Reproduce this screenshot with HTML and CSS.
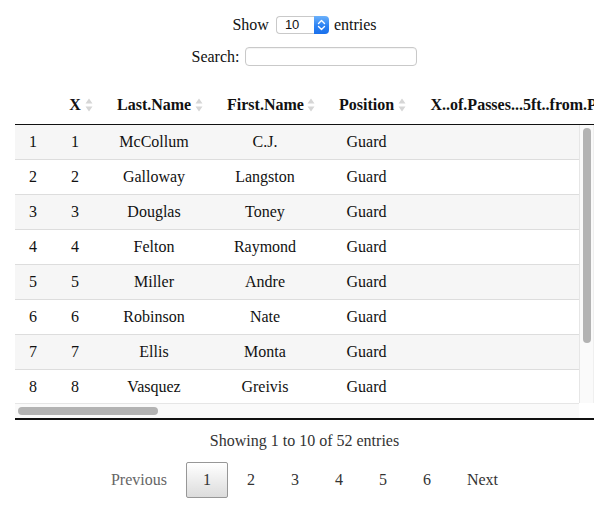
FILE: index.html
```html
<!DOCTYPE html>
<html lang="en">
<head>
<meta charset="utf-8">
<title>DataTable</title>
<link rel="stylesheet" href="styles.css">
</head>
<body>
<div class="dt-wrapper">
  <div class="dt-length">
    <span>Show</span>
    <div class="dt-select" role="combobox" aria-label="entries per page">
      <span class="dt-select-value">10</span>
      <span class="dt-select-arrow">
        <svg width="15" height="18" viewBox="0 0 15 18"><polyline points="4.5,7.5 7.5,4.5 10.5,7.5" fill="none" stroke="#fff" stroke-width="1.4" stroke-linecap="round" stroke-linejoin="round"/><polyline points="4.5,10.5 7.5,13.5 10.5,10.5" fill="none" stroke="#fff" stroke-width="1.4" stroke-linecap="round" stroke-linejoin="round"/></svg>
      </span>
    </div>
    <span>entries</span>
  </div>
  <div class="dt-filter">
    <label for="q">Search:</label><input id="q" class="dt-search" type="text">
  </div>

  <div class="dt-scroll">
    <div class="dt-scroll-head">
      <table class="dt-table">
        <colgroup>
          <col class="c-idx"><col class="c-x"><col class="c-last"><col class="c-first"><col class="c-pos"><col class="c-pass">
        </colgroup>
        <thead>
          <tr>
            <th></th>
            <th>X<svg class="sort" viewBox="0 0 8 14"><path d="M4 0.5 L7.5 5.5 L0.5 5.5 Z M0.5 8.5 L7.5 8.5 L4 13.5 Z" fill="#d6d6d6"/></svg></th>
            <th>Last.Name<svg class="sort" viewBox="0 0 8 14"><path d="M4 0.5 L7.5 5.5 L0.5 5.5 Z M0.5 8.5 L7.5 8.5 L4 13.5 Z" fill="#d6d6d6"/></svg></th>
            <th>First.Name<svg class="sort" viewBox="0 0 8 14"><path d="M4 0.5 L7.5 5.5 L0.5 5.5 Z M0.5 8.5 L7.5 8.5 L4 13.5 Z" fill="#d6d6d6"/></svg></th>
            <th>Position<svg class="sort" viewBox="0 0 8 14"><path d="M4 0.5 L7.5 5.5 L0.5 5.5 Z M0.5 8.5 L7.5 8.5 L4 13.5 Z" fill="#d6d6d6"/></svg></th>
            <th>X..of.Passes...5ft..from.Paint.<svg class="sort" viewBox="0 0 8 14"><path d="M4 0.5 L7.5 5.5 L0.5 5.5 Z M0.5 8.5 L7.5 8.5 L4 13.5 Z" fill="#d6d6d6"/></svg></th>
          </tr>
        </thead>
      </table>
    </div>
    <div class="dt-scroll-body">
      <div class="dt-viewport">
        <table class="dt-table">
          <colgroup>
            <col class="c-idx"><col class="c-x"><col class="c-last"><col class="c-first"><col class="c-pos"><col class="c-pass">
          </colgroup>
          <tbody>
            <tr><td>1</td><td>1</td><td>McCollum</td><td>C.J.</td><td>Guard</td><td></td></tr>
            <tr><td>2</td><td>2</td><td>Galloway</td><td>Langston</td><td>Guard</td><td></td></tr>
            <tr><td>3</td><td>3</td><td>Douglas</td><td>Toney</td><td>Guard</td><td></td></tr>
            <tr><td>4</td><td>4</td><td>Felton</td><td>Raymond</td><td>Guard</td><td></td></tr>
            <tr><td>5</td><td>5</td><td>Miller</td><td>Andre</td><td>Guard</td><td></td></tr>
            <tr><td>6</td><td>6</td><td>Robinson</td><td>Nate</td><td>Guard</td><td></td></tr>
            <tr><td>7</td><td>7</td><td>Ellis</td><td>Monta</td><td>Guard</td><td></td></tr>
            <tr><td>8</td><td>8</td><td>Vasquez</td><td>Greivis</td><td>Guard</td><td></td></tr>
          </tbody>
        </table>
      </div>
      <div class="vscroll"><div class="vthumb"></div></div>
      <div class="hscroll"><div class="hthumb"></div></div>
      <div class="scroll-corner"></div>
    </div>
  </div>

  <div class="dt-info">Showing 1 to 10 of 52 entries</div>
  <div class="dt-paginate">
    <span class="page-btn disabled">Previous</span>
    <span class="page-btn current">1</span>
    <span class="page-btn">2</span>
    <span class="page-btn">3</span>
    <span class="page-btn">4</span>
    <span class="page-btn">5</span>
    <span class="page-btn">6</span>
    <span class="page-btn">Next</span>
  </div>
</div>
</body>
</html>
```

FILE: styles.css
```css
body {
  margin: 0;
  background: #fff;
  color: #111;
  font-family: "Liberation Serif", "Times New Roman", serif;
  font-size: 16px;
  line-height: 18px;
}

.dt-wrapper {
  width: 579px;
  margin-left: 15px;
  padding-top: 16px;
}

/* Show N entries */
.dt-length {
  display: flex;
  justify-content: center;
  align-items: center;
  height: 18px;
}

.dt-select {
  display: flex;
  width: 53px;
  height: 18px;
  margin: 0 5px 0 7px;
}

.dt-select-value {
  flex: 1;
  box-sizing: border-box;
  border: 1px solid #c9c9c9;
  border-right: none;
  border-radius: 4px 0 0 4px;
  background: #fff;
  padding-left: 8px;
  font-family: "Liberation Sans", Arial, sans-serif;
  font-size: 13px;
  line-height: 16px;
  color: #111;
}

.dt-select-arrow {
  display: flex;
  width: 15px;
  border-radius: 0 4px 4px 0;
  background: linear-gradient(to bottom, #6bb1fb 0%, #2c82f3 55%, #1a70eb 100%);
}

/* Search */
.dt-filter {
  display: flex;
  justify-content: center;
  align-items: center;
  margin-top: 13px;
  height: 19px;
}

.dt-search {
  box-sizing: border-box;
  width: 172px;
  height: 19px;
  margin: 0 0 0 6px;
  padding: 0 4px;
  border: 1px solid #c9c9c9;
  border-radius: 4px;
  background: #fff;
  box-shadow: inset 0 1px 1px rgba(0, 0, 0, 0.05);
  outline: none;
}

/* Scrolling table */
.dt-scroll {
  margin-top: 20px;
}

.dt-scroll-head {
  width: 579px;
  overflow: hidden;
}

.dt-scroll-body {
  display: grid;
  grid-template-columns: 564px 15px;
  grid-template-rows: 278px 15px;
  width: 579px;
  border-bottom: 2px solid #111;
}

.dt-viewport {
  overflow: hidden;
}

.vscroll {
  box-sizing: border-box;
  padding: 3px 3px 0 4px;
  background: #fafafa;
  border-left: 1px solid #e6e6e6;
  border-right: 1px solid #efefef;
}

.vscroll .vthumb {
  width: 8px;
  height: 215px;
  margin-left: -1px;
  border-radius: 4px;
  background: #b3b3b3;
}

.hscroll {
  box-sizing: border-box;
  padding: 3px 0 0 3px;
  background: #fafafa;
  border-top: 1px solid #e6e6e6;
}

.hscroll .hthumb {
  width: 140px;
  height: 8px;
  border-radius: 4px;
  background: #b3b3b3;
}

.scroll-corner {
  background: #fff;
}

.dt-table {
  width: 631px;
  table-layout: fixed;
  border-collapse: separate;
  border-spacing: 0;
}

.c-idx { width: 36px; }
.c-x { width: 48px; }
.c-last { width: 110px; }
.c-first { width: 112px; }
.c-pos { width: 91px; }
.c-pass { width: 234px; }

.dt-table th {
  position: relative;
  padding: 10px 18px;
  font-weight: bold;
  text-align: center;
  white-space: nowrap;
  line-height: 18px;
  color: #111;
  border-bottom: 1px solid #111;
}

.dt-table .sort {
  position: absolute;
  right: 6px;
  top: 50%;
  width: 8px;
  height: 14px;
  margin-top: -7px;
}

.dt-table td {
  padding: 8px 10px;
  text-align: center;
  white-space: nowrap;
  line-height: 18px;
  border-top: 1px solid #ddd;
}

.dt-table tbody tr:first-child td {
  border-top: none;
}

.dt-table tbody tr:nth-child(odd) td {
  background: #f6f6f6;
}

/* Info + pagination */
.dt-info {
  margin-top: 12px;
  text-align: center;
  color: #333;
}

.dt-paginate {
  display: flex;
  justify-content: center;
  gap: 2px;
  margin-top: 12px;
}

.page-btn {
  box-sizing: border-box;
  min-width: 1.5em;
  padding: 8px 16px;
  border: 1px solid transparent;
  border-radius: 2px;
  text-align: center;
  color: #333;
  line-height: 18px;
}

.page-btn.disabled {
  color: #666;
}

.page-btn.current {
  border-color: #979797;
  background: linear-gradient(to bottom, #fff 0%, #dcdcdc 100%);
}
```
